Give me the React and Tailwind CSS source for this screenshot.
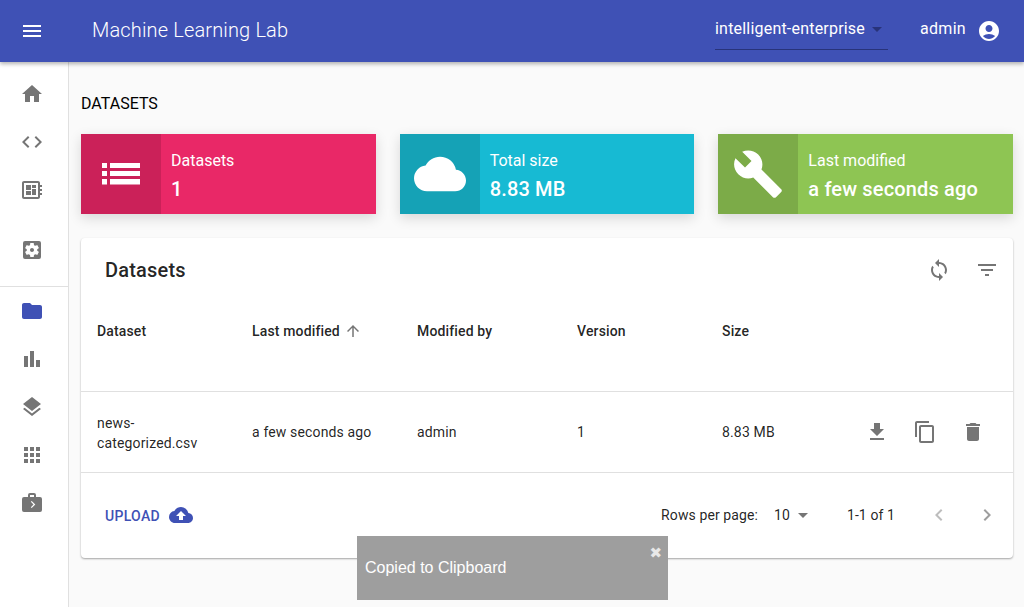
import {
  MdMenu, MdHome, MdCode, MdDeveloperBoard, MdSettingsApplications, MdFolder, MdBarChart, MdLayers, MdApps,
  MdCloud, MdBuild, MdAccountCircle, MdSync, MdFilterList, MdArrowUpward, MdFileDownload,
  MdContentCopy, MdDelete, MdCloudUpload, MdChevronLeft, MdChevronRight, MdArrowDropDown,
} from 'react-icons/md'

function BriefcaseIcon({ className }) {
  return (
    <svg viewBox="0 0 24 24" className={className} fill="currentColor">
      <path d="M10 2h4a2 2 0 0 1 2 2v2h4a2 2 0 0 1 2 2v11a2 2 0 0 1-2 2H4a2 2 0 0 1-2-2V8a2 2 0 0 1 2-2h4V4a2 2 0 0 1 2-2zm4 4V4h-4v2h4z" fillRule="evenodd" />
      <path d="M10.8 10.8l.9-.9 3.6 3.6-3.6 3.6-.9-.9 2.7-2.7z" fill="#fff" />
    </svg>
  )
}

function ListIcon() {
  return (
    <svg width="38" height="22" viewBox="0 0 38 22" fill="currentColor">
      <rect x="0" y="0" width="5" height="5" />
      <rect x="8" y="0" width="30" height="5" />
      <rect x="0" y="8" width="5" height="5" />
      <rect x="8" y="8" width="30" height="5" />
      <rect x="0" y="16" width="5" height="5.5" />
      <rect x="8" y="16" width="30" height="5.5" />
    </svg>
  )
}

function SideIcon({ icon: Icon, active }) {
  return (
    <div className={`h-12 pr-1 flex items-center justify-center ${active ? 'text-[#3f51b5]' : 'text-[#757575]'}`}>
      <Icon className="w-6 h-6" size={24} />
    </div>
  )
}

function StatCard({ icon: Icon, iconSize, dark, light, label, value }) {
  return (
    <div className={`flex h-20 shadow-[0_4px_12px_rgba(0,0,0,0.14)] text-white ${light}`}>
      <div className={`w-20 flex items-center justify-center ${dark}`}>
        <Icon size={iconSize} />
      </div>
      <div className="pl-2.5 pt-4">
        <div className="text-base leading-[22px] font-normal">{label}</div>
        <div className="text-xl leading-[28px] mt-[3px] font-medium tracking-[0.15px]">{value}</div>
      </div>
    </div>
  )
}

export default function App() {
  return (
    <div className="relative h-[607px] overflow-hidden bg-[#fafafa] font-['Roboto',sans-serif] text-[rgba(0,0,0,0.87)]">
      <header className="relative z-10 h-[62px] bg-[#3f51b5] text-white flex items-center shadow-[0_2px_4px_rgba(0,0,0,0.3)]">
        <div className="w-[64px] flex justify-center">
          <MdMenu size={24} />
        </div>
        <div className="ml-7 text-xl font-light tracking-[0.15px] mb-[2px]">Machine Learning Lab</div>
        <div className="ml-auto w-[173px] h-[38px] mt-[-1px] border-b border-[#28337a] flex items-center justify-between text-base tracking-[0.2px] pb-[2px]">
          <span className="whitespace-nowrap">intelligent-enterprise</span>
          <MdArrowDropDown size={24} className="shrink-0 text-[#28337a]" />
        </div>
        <div className="ml-8 text-base tracking-[0.3px] mb-[4px]">admin</div>
        <MdAccountCircle size={24} className="ml-[11px] mr-[23px]" />
      </header>

      <div className="flex h-[545px]">
        <aside className="w-[69px] shrink-0 bg-white border-r border-[#e0e0e0] pt-2">
          <SideIcon icon={MdHome} />
          <SideIcon icon={MdCode} />
          <SideIcon icon={MdDeveloperBoard} />
          <div className="mt-3">
            <SideIcon icon={MdSettingsApplications} />
          </div>
          <div className="border-t border-[#e0e0e0] mt-3" />
          <SideIcon icon={MdFolder} active />
          <SideIcon icon={MdBarChart} />
          <SideIcon icon={MdLayers} />
          <SideIcon icon={MdApps} />
          <SideIcon icon={BriefcaseIcon} />
        </aside>

        <main className="flex-1 pl-3 pr-[11px]">
          <h1 className="mt-8 text-base leading-5 font-normal text-black">DATASETS</h1>

          <div className="mt-5 grid grid-cols-3 gap-x-6">
            <StatCard icon={ListIcon} dark="bg-[#cb2159]" light="bg-[#e92867]" label="Datasets" value="1" />
            <StatCard icon={MdCloud} iconSize={52} dark="bg-[#15a2b6]" light="bg-[#17bad3]" label="Total size" value="8.83 MB" />
            <StatCard icon={MdBuild} iconSize={52} dark="bg-[#7cab48]" light="bg-[#8ec553]" label="Last modified" value="a few seconds ago" />
          </div>

          <section className="mt-6 h-[320px] bg-white rounded shadow-[0_1px_2px_rgba(0,0,0,0.35)] flex flex-col">
            <div className="h-[62px] pl-6 pr-[14px] flex items-center">
              <h2 className="text-xl font-medium tracking-[0.2px] mt-[2px]">Datasets</h2>
              <MdSync size={24} className="ml-auto mt-[2px] text-[#757575]" />
              <MdFilterList size={24} className="ml-6 mt-[2px] text-[#757575]" />
            </div>

            <table className="w-full table-fixed text-sm text-left tracking-[0.15px]">
              <colgroup>
                <col className="w-[171px]" />
                <col className="w-[165px]" />
                <col className="w-[160px]" />
                <col className="w-[145px]" />
                <col className="w-[130px]" />
                <col />
              </colgroup>
              <thead>
                <tr className="h-[91px] border-b border-[#e0e0e0] align-top">
                  <th className="pl-4 pt-[21px] font-medium">Dataset</th>
                  <th className="pl-0 pt-[21px] font-medium">
                    <span className="inline-flex items-center">
                      Last modified
                      <MdArrowUpward size={18} className="ml-1 text-[#757575]" />
                    </span>
                  </th>
                  <th className="pt-[21px] font-medium">Modified by</th>
                  <th className="pt-[21px] font-medium">Version</th>
                  <th className="pt-[21px] font-medium">Size</th>
                  <th />
                </tr>
              </thead>
              <tbody>
                <tr className="h-[81px] border-b border-[#e0e0e0]">
                  <td className="pl-4 pr-10 pt-[2px] leading-5">news-categorized.csv</td>
                  <td>a few seconds ago</td>
                  <td>admin</td>
                  <td>1</td>
                  <td>8.83 MB</td>
                  <td>
                    <div className="flex items-center gap-6 pl-[13px] text-[#757575]">
                      <MdFileDownload size={24} className="shrink-0" />
                      <MdContentCopy size={24} className="shrink-0" />
                      <MdDelete size={24} className="shrink-0" />
                    </div>
                  </td>
                </tr>
              </tbody>
            </table>

            <div className="flex-1 flex items-center pl-6 pr-[14px] text-sm">
              <span className="font-medium text-[#3f51b5] tracking-[0.3px] mt-px">UPLOAD</span>
              <MdCloudUpload size={24} className="ml-[9px] text-[#3f51b5]" />
              <span className="ml-auto tracking-[0.1px]">Rows per page:</span>
              <span className="ml-4 tracking-[0.1px]">10</span>
              <MdArrowDropDown size={24} className="ml-[1px] text-[#757575]" />
              <span className="ml-[32px] tracking-[0.1px]">1-1 of 1</span>
              <MdChevronLeft size={24} className="ml-[32px] text-[#bdbdbd]" />
              <MdChevronRight size={24} className="ml-6 text-[#9e9e9e]" />
            </div>
          </section>
        </main>
      </div>

      <div className="absolute left-[357px] top-[536px] w-[311px] h-[64px] z-20 bg-[#9e9e9e] text-white font-['Liberation_Sans',sans-serif]">
        <div className="pl-2 pt-[21px] text-base leading-[22px]">Copied to Clipboard</div>
        <span className="absolute right-[6px] top-[7px] text-[15px] leading-[20px] text-[#e8e8e8] font-['DejaVu_Sans',sans-serif]">✖</span>
      </div>
    </div>
  )
}
